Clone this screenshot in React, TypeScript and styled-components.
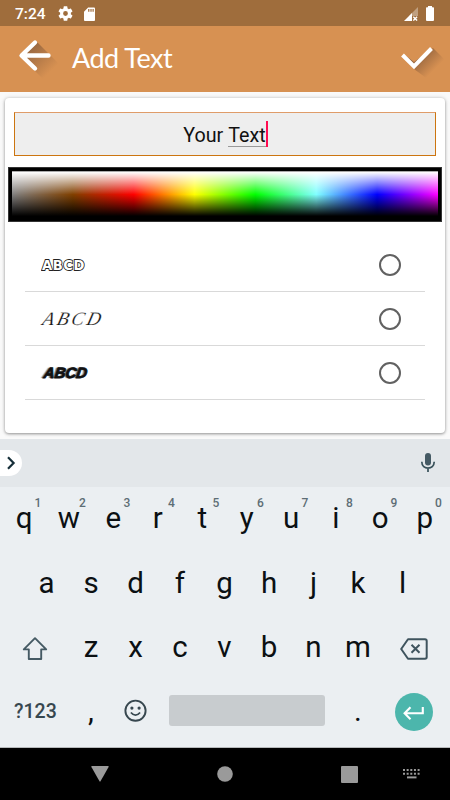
import React from 'react';
import styled, { createGlobalStyle, css } from 'styled-components';

const Global = createGlobalStyle`
  * { box-sizing: border-box; }
  body { margin: 0; background: #fafafa; font-family: Roboto, sans-serif; }
  svg { display: block; flex: none; }
`;

const Screen = styled.div`
  width: 450px;
  height: 800px;
  display: flex;
  flex-direction: column;
  overflow: hidden;
  background: #fafafa;
`;

const StatusBar = styled.div`
  height: 26px;
  flex: none;
  display: flex;
  align-items: center;
  padding: 1px 16px 0 15px;
  background: #9f6d3c;
  color: #fff;
`;

const Clock = styled.span`
  width: 43px;
  padding-top: 1px;
  font-size: 15.5px;
  font-weight: 500;
  line-height: 25px;
`;

const StatusIcons = styled.div<{ $end?: boolean }>`
  display: flex;
  align-items: center;
  gap: ${(p) => (p.$end ? 8 : 11)}px;
  margin-left: ${(p) => (p.$end ? 'auto' : '0')};
`;

const AppBar = styled.header`
  height: 66px;
  flex: none;
  display: flex;
  align-items: center;
  background: #d79152;
  color: #fff;
`;

const Title = styled.h1`
  margin: 0 auto 0 0;
  padding: 0 0 2px 12px;
  font-family: Lato, sans-serif;
  font-size: 27px;
  font-weight: 400;
  letter-spacing: -0.5px;
  line-height: 40px;
`;

const Card = styled.main`
  height: 335px;
  flex: none;
  margin: 6px 5px;
  padding: 14px 3px 0;
  display: flex;
  flex-direction: column;
  background: #fff;
  border-radius: 4px;
  box-shadow: 0 1px 3px rgba(0, 0, 0, 0.36), 0 0 5px rgba(0, 0, 0, 0.13);
`;

const TextField = styled.div`
  height: 44px;
  flex: none;
  margin: 0 6px;
  padding: 4px 0 0 1px;
  display: flex;
  align-items: center;
  justify-content: center;
  border: 1px solid #cc7510;
  border-top-color: #df9c69;
  background: #eee;
  color: #111;
  font-size: 19.7px;
  line-height: 26px;
  white-space: pre;
`;

const Composing = styled.span`
  height: 24px;
  margin-top: -2px;
  line-height: 26px;
  border-bottom: 1px solid #999;
`;

const Caret = styled.i`
  width: 2px;
  height: 26px;
  margin-top: -4px;
  background: #ff0c51;
`;

const Palette = styled.div`
  height: 55px;
  flex: none;
  margin-top: 11px;
  padding: 3px 3px 4px;
  display: flex;
  background: #000;
  border: 1px solid #333;
`;

const Spectrum = styled.div`
  flex: 1;
  border-top: 1px solid #aaa;
  background:
    linear-gradient(to bottom, #fff 0%, rgba(255, 255, 255, 0) 50%, rgba(0, 0, 0, 0) 50%, #000 98%),
    linear-gradient(to right, #808080, #804000, #ff0000, #ffff00, #00ff00, #80ffff, #0000ff, #ff00ff);
`;

const FontList = styled.div`
  margin: 16px 17px 0;
  display: flex;
  flex-direction: column;
`;

const FontRow = styled.div`
  height: 54px;
  display: flex;
  align-items: center;
  justify-content: space-between;
  padding: 0 24px 0 17px;
  border-bottom: 1px solid #d9d9d9;
`;

type Face = 'outline' | 'script' | 'speed';

const faces = {
  outline: css`
    font: 700 14px/20px 'DejaVu Sans', sans-serif;
    letter-spacing: 0.6px;
    color: #fff;
    -webkit-text-stroke: 1.8px #222;
    paint-order: stroke fill;
    transform: scaleX(0.94);
    transform-origin: left;
  `,
  script: css`
    font: italic 400 19px/20px 'Liberation Serif', serif;
    letter-spacing: 2.8px;
    color: #111;
    -webkit-text-stroke: 0.2px #fff;
    transform: skewX(-14deg);
    margin-left: 1px;
  `,
  speed: css`
    font: italic 700 15px/20px 'Liberation Sans', sans-serif;
    color: #111;
    -webkit-text-stroke: 0.8px #111;
    text-shadow: -1px 0 0 #666, -2px 0 1px #888;
    transform: skewX(-8deg);
    margin-left: 2px;
  `,
};

const Sample = styled.span<{ $face: Face }>`
  ${(p) => faces[p.$face]}
`;

const Radio = styled.span`
  width: 22px;
  height: 22px;
  border: 2px solid #616161;
  border-radius: 50%;
`;

const Keyboard = styled.section`
  height: 309px;
  flex: none;
  background: #ebeff2;
  border-bottom: 1px solid #b6b9bb;
`;

const Suggestions = styled.div`
  height: 48px;
  display: flex;
  align-items: center;
  justify-content: space-between;
  padding-right: 11px;
  background: #e3e7ea;
`;

const Expand = styled.div`
  width: 22px;
  height: 26px;
  margin-bottom: 1px;
  display: flex;
  align-items: center;
  justify-content: center;
  border-radius: 0 13px 13px 0;
  background: #fff;
`;

const Keys = styled.div`
  display: flex;
  flex-direction: column;
  margin-top: -1px;
  padding: 0 2.8px 0 1.8px;
`;

const KeyRow = styled.div`
  height: 64.4px;
  display: flex;
  justify-content: center;
`;

const Key = styled.div<{ $span?: number; $small?: boolean; $low?: boolean }>`
  position: relative;
  width: ${(p) => 44.5 * (p.$span ?? 1)}px;
  padding-top: ${(p) => (p.$low ? 4 : p.$small ? 2 : 0)}px;
  display: flex;
  align-items: center;
  justify-content: center;
  color: ${(p) => (p.$small ? '#37474f' : '#0b1013')};
  font-size: ${(p) => (p.$small ? 19.5 : 29.5)}px;
  font-weight: ${(p) => (p.$small ? 500 : 400)};
  line-height: 36px;
`;

const Hint = styled.sup`
  position: absolute;
  top: 9px;
  left: 31px;
  width: 10px;
  text-align: center;
  color: #5d6d75;
  font-size: 12px;
  font-weight: 500;
  line-height: 16px;
`;

const SpaceBar = styled.div`
  width: 156px;
  height: 31px;
  margin-bottom: 1px;
  border-radius: 3px;
  background: #c8cccf;
`;

const Enter = styled.div`
  width: 38px;
  height: 38px;
  margin-top: 1px;
  display: flex;
  align-items: center;
  justify-content: center;
  border-radius: 50%;
  background: #4cb6ac;
`;

const NavBar = styled.nav`
  height: 52px;
  flex: none;
  display: grid;
  grid-template-columns: 126px 124px 62px 1fr;
  align-items: center;
  padding-left: 91px;
  background: #000;
`;

const BackArrow = () => (
  <svg width="60" height="66" viewBox="0 0 60 66">
    <defs>
      <linearGradient id="backShade" x1="25" y1="20" x2="50" y2="46" gradientUnits="userSpaceOnUse">
        <stop offset="0" stopColor="#8c5f3c" stopOpacity=".95" />
        <stop offset="1" stopColor="#8c5f3c" stopOpacity="0" />
      </linearGradient>
    </defs>
    <path d="M36 15 L60 39 L45 55 L19 29 Z" fill="url(#backShade)" />
    <path d="M35 16.5 L21.5 29.5 L35 42.5 M22 29.5 H48.5" fill="none" stroke="#fff" strokeWidth="4.4" strokeLinecap="round" strokeLinejoin="round" />
  </svg>
);

const Check = () => (
  <svg width="50" height="66" viewBox="0 0 50 66">
    <defs>
      <linearGradient id="checkShade" x1="20" y1="28" x2="35" y2="43" gradientUnits="userSpaceOnUse">
        <stop offset="0" stopColor="#8c5f3c" stopOpacity=".9" />
        <stop offset="1" stopColor="#8c5f3c" stopOpacity="0" />
      </linearGradient>
    </defs>
    <path d="M5 29 L14 36 L33 22 L50 39 L33 57 L14 43Z" fill="url(#checkShade)" />
    <path d="M2.5 29 L14 40.5 L31.5 22.5" fill="none" stroke="#fff" strokeWidth="4" />
  </svg>
);

const Gear = () => (
  <svg width="15" height="15" viewBox="2 2 20 20">
    <path fill="#fff" d="M19.14 12.94c.04-.3.06-.61.06-.94s-.02-.64-.07-.94l2.03-1.58a.5.5 0 0 0 .12-.61l-1.92-3.32a.5.5 0 0 0-.59-.22l-2.39.96a7 7 0 0 0-1.62-.94l-.36-2.54a.48.48 0 0 0-.48-.41h-3.84a.48.48 0 0 0-.47.41l-.36 2.54c-.59.24-1.13.57-1.62.94l-2.39-.96a.5.5 0 0 0-.59.22L2.74 8.87a.48.48 0 0 0 .12.61l2.03 1.58a6 6 0 0 0 0 1.88l-2.03 1.58a.5.5 0 0 0-.12.61l1.92 3.32c.12.22.37.29.59.22l2.39-.96c.5.38 1.03.7 1.62.94l.36 2.54c.05.24.24.41.48.41h3.84c.24 0 .44-.17.47-.41l.36-2.54a7 7 0 0 0 1.62-.94l2.39.96c.22.08.47 0 .59-.22l1.92-3.32a.48.48 0 0 0-.12-.61zM12 15.2a3.2 3.2 0 1 1 0-6.4 3.2 3.2 0 0 1 0 6.4z" />
  </svg>
);

const SdCard = () => (
  <svg width="11" height="14" viewBox="0 0 12 15">
    <path fill="#fff" fillRule="evenodd" d="M4.5 0.5H11a1 1 0 0 1 1 1V14a1 1 0 0 1-1 1H1a1 1 0 0 1-1-1V5z M4.5 2v3h1.4V2z M7 2v3h1.3V2z M9.3 2v3h1.3V2z" />
  </svg>
);

const Signal = () => (
  <svg width="14" height="14" viewBox="0 0 14 14">
    <path fill="#fff" fillOpacity=".35" d="M14 0v9H5z" />
    <path fill="#fff" d="M0 14 L8 6 V14z" />
    <path stroke="#fff" strokeWidth="1.4" d="M9.3 9.8l3.8 3.8M13.1 9.8l-3.8 3.8" />
  </svg>
);

const Battery = () => (
  <svg width="8" height="15" viewBox="0 0 8 15">
    <path fill="#fff" d="M2 0h4v1.2h1.2a.8.8 0 0 1 .8.8v12a1 1 0 0 1-1 1H1a1 1 0 0 1-1-1V2a.8.8 0 0 1 .8-.8H2z" />
  </svg>
);

const Chevron = () => (
  <svg width="22" height="26" viewBox="0 0 22 26">
    <path d="M8 7.3 L13.6 13 L8 18.7" fill="none" stroke="#152e38" strokeWidth="2.2" />
  </svg>
);

const Mic = () => (
  <svg width="22" height="28" viewBox="0 0 22 28">
    <rect x="8" y="4" width="6" height="12.5" rx="3" fill="#455a64" />
    <path d="M4.8 12.8 C4.8 21.2 17.2 21.2 17.2 12.8 M11 19v4" fill="none" stroke="#375059" strokeWidth="1.7" />
  </svg>
);

const Shift = () => (
  <svg width="26" height="26" viewBox="0 0 26 26">
    <path d="M13 2.2 L24.2 13.4 H19.2 V23 H6.8 V13.4 H1.8 Z" fill="none" stroke="#455a64" strokeWidth="1.9" strokeLinejoin="round" />
  </svg>
);

const Backspace = () => (
  <svg width="28" height="24" viewBox="0 0 28 24">
    <path d="M8 2.2 H25 Q26.7 2.2 26.7 3.9 V20 Q26.7 21.7 25 21.7 H8 L1.2 12 Z M11.5 7.8l8 8M19.5 7.8l-8 8" fill="none" stroke="#3f545e" strokeWidth="2" strokeLinejoin="round" />
  </svg>
);

const Smiley = () => (
  <svg width="24" height="24" viewBox="0 0 24 24">
    <circle cx="11.5" cy="11.7" r="10.1" fill="none" stroke="#37474f" strokeWidth="1.9" />
    <circle cx="7.9" cy="9.1" r="1.6" fill="#37474f" />
    <circle cx="15.1" cy="9.1" r="1.6" fill="#37474f" />
    <path d="M6.9 13.5 Q11.5 18.9 16.1 13.5" fill="none" stroke="#37474f" strokeWidth="1.8" />
  </svg>
);

const Return = () => (
  <svg width="24" height="18" viewBox="0 0 24 18">
    <path d="M20.8 4 V10.3 H3 M8.5 4.2 L2.6 10.3 L8.5 16.2" fill="none" stroke="#fff" strokeWidth="2.1" />
  </svg>
);

const KeyboardGlyph = () => (
  <svg width="17" height="10" viewBox="0 0 17 10">
    {[0, 3.65, 7.3, 10.95, 14.6].map((x) => (
      <path key={x} fill="#9a9a9a" d={`M${x} 0h2v2h-2z M${x} 3.7h2v2h-2z`} />
    ))}
    <path fill="#9a9a9a" d="M4 7.4h9.5v2H4z" />
  </svg>
);

const samples: Face[] = ['outline', 'script', 'speed'];

export default function App() {
  return (
    <Screen>
      <Global />
      <StatusBar>
        <Clock>7:24</Clock>
        <StatusIcons>
          <Gear />
          <SdCard />
        </StatusIcons>
        <StatusIcons $end>
          <Signal />
          <Battery />
        </StatusIcons>
      </StatusBar>
      <AppBar>
        <BackArrow />
        <Title>Add Text</Title>
        <Check />
      </AppBar>
      <Card>
        <TextField>
          {'Your '}
          <Composing>Text</Composing>
          <Caret />
        </TextField>
        <Palette>
          <Spectrum />
        </Palette>
        <FontList>
          {samples.map((face) => (
            <FontRow key={face}>
              <Sample $face={face}>ABCD</Sample>
              <Radio />
            </FontRow>
          ))}
        </FontList>
      </Card>
      <Keyboard>
        <Suggestions>
          <Expand>
            <Chevron />
          </Expand>
          <Mic />
        </Suggestions>
        <Keys>
          <KeyRow>
            {[...'qwertyuiop'].map((c, i) => (
              <Key key={c}>
                {c}
                <Hint>{(i + 1) % 10}</Hint>
              </Key>
            ))}
          </KeyRow>
          <KeyRow>
            {[...'asdfghjkl'].map((c) => (
              <Key key={c}>{c}</Key>
            ))}
          </KeyRow>
          <KeyRow>
            <Key $span={1.5} $low>
              <Shift />
            </Key>
            {[...'zxcvbnm'].map((c) => (
              <Key key={c}>{c}</Key>
            ))}
            <Key $span={1.5} $low>
              <Backspace />
            </Key>
          </KeyRow>
          <KeyRow>
            <Key $span={1.5} $small>?123</Key>
            <Key>,</Key>
            <Key>
              <Smiley />
            </Key>
            <Key $span={4}>
              <SpaceBar />
            </Key>
            <Key>.</Key>
            <Key $span={1.5}>
              <Enter>
                <Return />
              </Enter>
            </Key>
          </KeyRow>
        </Keys>
      </Keyboard>
      <NavBar>
        <svg width="18" height="16" viewBox="0 0 18 16">
          <path fill="#9a9a9a" d="M1 0H17q1 0 .6 1L9.5 15.3q-.5.8-1 0L.4 1Q0 0 1 0z" />
        </svg>
        <svg width="16" height="16" viewBox="0 0 16 16">
          <circle cx="8" cy="8" r="7.8" fill="#9a9a9a" />
        </svg>
        <svg width="17" height="17" viewBox="0 0 17 17">
          <rect width="17" height="17" rx="1" fill="#9a9a9a" />
        </svg>
        <KeyboardGlyph />
      </NavBar>
    </Screen>
  );
}
